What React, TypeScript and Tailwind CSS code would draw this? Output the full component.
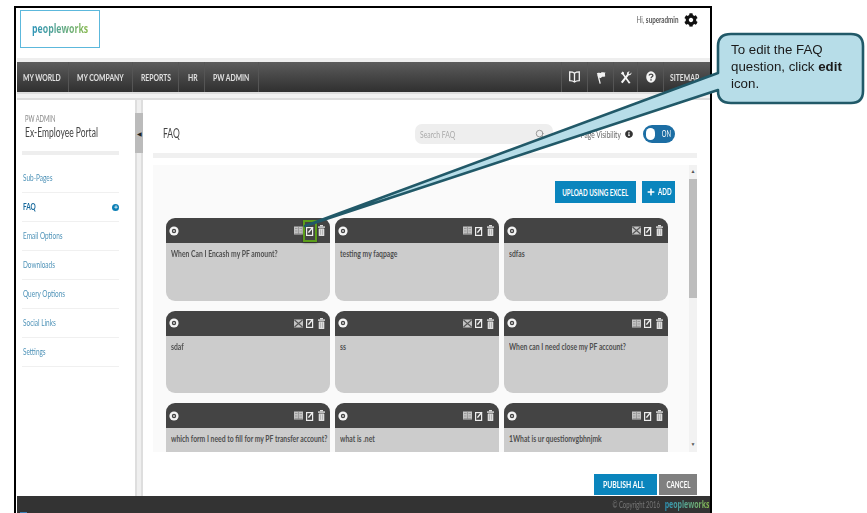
import React from "react";
import { FaCog, FaInfoCircle, FaPlus } from "react-icons/fa";
import { FiSearch } from "react-icons/fi";

const cond = { fontFamily: '"Lato", "Liberation Sans", sans-serif' };

type T = { children: React.ReactNode; c?: string };
function N({ children, c }: T) {
  return <span className={`inline-block whitespace-nowrap origin-left scale-x-[0.68] ${c ?? ""}`}>{children}</span>;
}
function NC({ children, c }: T) {
  return <span className={`inline-block whitespace-nowrap origin-center scale-x-[0.62] ${c ?? ""}`}>{children}</span>;
}
function NR({ children, c }: T) {
  return <span className={`inline-block whitespace-nowrap origin-right scale-x-[0.66] ${c ?? ""}`}>{children}</span>;
}

function Logo({ small }: { small?: boolean }) {
  return (
    <span
      className={`inline-block whitespace-nowrap origin-center scale-x-[0.7] font-bold bg-gradient-to-r from-[#2a93b8] to-[#86b84a] bg-clip-text text-transparent ${small ? "text-[10px]" : "text-[12.5px]"}`}
      style={{ fontFamily: '"Open Sans", sans-serif' }}
    >
      peopleworks
    </span>
  );
}

function Eye() {
  return (
    <svg width="10" height="10" viewBox="0 0 10 10">
      <circle cx="5" cy="5" r="4.6" fill="#f4f4f4" />
      <circle cx="5" cy="5" r="2.2" fill="#444" />
      <circle cx="5" cy="5" r="0.9" fill="#ddd" />
    </svg>
  );
}

function Book({ crossed }: { crossed?: boolean }) {
  return (
    <svg width="9" height="9" viewBox="0 0 9 9">
      <rect x="0" y="0.5" width="9" height="8" fill="#c4c4c4" />
      {crossed ? (
        <path d="M0.5 1L8.5 8M8.5 1L0.5 8" stroke="#555" strokeWidth="1.1" />
      ) : (
        <path d="M1 2.5h2.5M1 5h2.5M5.5 2.5h2.5M5.5 5h2.5M4.5 1v7M0.5 7.4h8" stroke="#8a8a8a" strokeWidth="0.7" />
      )}
    </svg>
  );
}

function Edit() {
  return (
    <svg width="8" height="10" viewBox="0 0 8 10">
      <rect x="0.6" y="1.6" width="6" height="7.8" fill="none" stroke="#eeeeee" strokeWidth="1.2" />
      <path d="M2.4 6.6L6.8 1.2" stroke="#eeeeee" strokeWidth="1.5" />
    </svg>
  );
}

function Trash() {
  return (
    <svg width="7" height="11" viewBox="0 0 7 11">
      <rect x="2" y="0" width="3" height="1.4" fill="#dddddd" />
      <rect x="0" y="1.4" width="7" height="1.4" fill="#dddddd" />
      <rect x="0.7" y="3.4" width="5.6" height="7.6" rx="0.6" fill="#dddddd" />
      <path d="M2.5 4.4v5.4M4.5 4.4v5.4" stroke="#999" strokeWidth="0.6" />
    </svg>
  );
}

function NavBook() {
  return (
    <svg width="11" height="12" viewBox="0 0 11 12">
      <path d="M5.5 2.2C4.3 1.2 2.6 0.9 0.7 0.9V9.6C2.6 9.6 4.3 10 5.5 11C6.7 10 8.4 9.6 10.3 9.6V0.9C8.4 0.9 6.7 1.2 5.5 2.2ZM5.5 2.2V11" fill="none" stroke="#f2f2f2" strokeWidth="1.3" />
    </svg>
  );
}
function NavFlag() {
  return (
    <svg width="10" height="13" viewBox="0 0 10 13">
      <path d="M0.8 2.6C2.4 0.8 4 3 5.2 1.6C6.4 0.8 8 2 9.4 1.2C8.6 3 9.2 4.2 9.2 5.2C7.6 6.2 6.6 5 5.4 6.4C4.2 7.4 3.4 6.6 2.8 6.8Z" fill="#f2f2f2" />
      <path d="M2 4L4.2 12.6" stroke="#f2f2f2" strokeWidth="1.3" />
    </svg>
  );
}
function NavTools() {
  return (
    <svg width="12" height="13" viewBox="0 0 12 13">
      <path d="M2.4 0.6L4 1.4V3L10.6 12L8.8 12.6L2.6 3.8L0.9 2.8Z" fill="#f4f4f4" />
      <path d="M11.4 1.6C11.8 3.2 10.4 4.6 8.8 4.2L2.6 12.2L0.9 11L7 3.2C6.6 1.6 8 0.2 9.6 0.6L8.5 2.2L9.8 3.2Z" fill="#f4f4f4" />
    </svg>
  );
}
function NavHelp() {
  return (
    <svg width="10" height="12" viewBox="0 0 10 12">
      <ellipse cx="5" cy="6" rx="4.8" ry="5.8" fill="#f4f4f4" />
      <path d="M3.2 4.6C3.2 2.6 6.9 2.6 6.9 4.6C6.9 5.8 5 5.8 5 7.2" fill="none" stroke="#444" strokeWidth="1.3" />
      <rect x="4.3" y="8.2" width="1.4" height="1.4" fill="#444" />
    </svg>
  );
}

function Card({ text, crossed }: { text: string; crossed?: boolean }) {
  return (
    <div className="h-[82.5px] flex flex-col">
      <div className="h-[25px] shrink-0 bg-[#444444] rounded-t-[9px] flex items-center pl-[3px] pr-[5px]">
        <span className="flex"><Eye /></span>
        <div className="ml-auto flex items-center">
          <Book crossed={crossed} />
          <span className="ml-[3px] flex"><Edit /></span>
          <span className="ml-[4px] flex"><Trash /></span>
        </div>
      </div>
      <div className="flex-1 min-w-0 bg-[#cccccc] rounded-b-[9px] px-[5px] pt-[4px] text-[10px] leading-[12px] font-bold text-[#4f4f4f]">
        <N>{text}</N>
      </div>
    </div>
  );
}

const leftNav = ["MY WORLD", "MY COMPANY", "REPORTS", "HR", "PW ADMIN"];
const navPad = ["pl-[6px] w-[52px]", "pl-[8px] w-[64px]", "pl-[8px] w-[46px]", "pl-[9px] w-[26px]", "pl-[8px] w-[54px]"];
const side = ["Sub-Pages", "FAQ", "Email Options", "Downloads", "Query Options", "Social Links", "Settings"];

const rows: { t: string; c?: boolean }[] = [
  { t: "When Can I Encash my PF amount?" },
  { t: "testing my faqpage" },
  { t: "sdfas", c: true },
  { t: "sdaf", c: true },
  { t: "ss", c: true },
  { t: "When can I need close my PF account?" },
  { t: "which form I need to fill for my PF transfer account?" },
  { t: "what is .net" },
  { t: "1What is ur questionvgbhnjmk" },
];

export default function App() {
  return (
    <div className="relative w-[867px] h-[513px] overflow-hidden bg-white" style={cond}>
      <div className="ml-[14px] mt-[6px] w-[698px] h-[507px] border-l-2 border-r-2 border-t-2 border-black pl-[1px] flex flex-col blur-[0.4px]">
        {/* header */}
        <div className="h-[50px] shrink-0 flex items-start">
          <div className="ml-[3px] mt-[2px] w-[80px] h-[38px] border border-[#5cb8dc] flex items-center justify-center overflow-hidden">
            <Logo />
          </div>
          <div className="ml-auto mr-[12px] mt-[5px] flex items-center gap-[6px]">
            <NR c="text-[9.5px] text-[#666]">Hi, <span className="font-bold text-[#555]">superadmin</span></NR>
            <FaCog className="text-[14px] text-[#111]" />
          </div>
        </div>
        <div className="h-[4px] shrink-0 bg-[#eeeeee]" />
        {/* nav */}
        <div className="h-[30px] shrink-0 bg-gradient-to-b from-[#5c5c5c] to-[#303030] flex items-center text-[10px] font-bold text-[#e0e0e0]">
          {leftNav.map((n, i) => (
            <div key={n} className={`${navPad[i]} h-full flex items-center border-r border-[#555555]`}><N>{n}</N></div>
          ))}
          <div className="ml-auto flex items-center h-full">
            <div className="w-[26px] h-full border-l border-[#555] flex items-center justify-center"><NavBook /></div>
            <div className="w-[26px] h-full border-l border-[#555] flex items-center justify-center"><NavFlag /></div>
            <div className="w-[24px] h-full border-l border-[#555] flex items-center justify-center"><NavTools /></div>
            <div className="w-[26px] h-full border-l border-[#555] flex items-center justify-center"><NavHelp /></div>
            <div className="w-[47px] h-full border-l border-[#555] pl-[6px] flex items-center"><N>SITEMAP</N></div>
          </div>
        </div>
        <div className="h-[8px] shrink-0 bg-[#f2f2f2] border-y-2 border-[#dddddd]" />
        {/* body */}
        <div className="flex-1 min-h-0 flex">
          <aside className="w-[118px] shrink-0 pl-[5px] pr-[16px] pt-[14px]">
            <div className="pl-[3px] text-[8.5px] leading-[10px] text-[#888]"><N>PW ADMIN</N></div>
            <div className="pl-[3px] mt-[1px] text-[12.5px] leading-[16px] text-[#444]"><N>Ex-Employee Portal</N></div>
            <div className="h-[4px] mt-[10px] bg-[#eeeeee] w-[97px]" />
            <div className="mt-[9px] w-[97px]">
              {side.map((s) => (
                <div key={s} className={`h-[29px] flex items-center justify-between border-b border-[#f0f0f0] text-[9.5px] pl-[1px] ${s === "FAQ" ? "font-bold text-[#17699c]" : "text-[#4f93b8]"}`}>
                  <N>{s}</N>
                  {s === "FAQ" && (
                    <span className="shrink-0 w-[7px] h-[7px] rounded-full bg-[#0c7fb5] flex items-center justify-center"><FaPlus className="text-[4px] text-white" /></span>
                  )}
                </div>
              ))}
            </div>
          </aside>
          {/* collapse strip */}
          <div className="w-[8px] shrink-0 bg-[#efefef] border-x-2 border-[#dedede] pt-[13px]">
            <div className="h-[40px] bg-[#bbbbbb] -mx-[2px] flex items-center justify-center text-[6px] text-[#222]">◀</div>
          </div>
          {/* main */}
          <main className="flex-1 min-w-0 pl-[10px] pr-[13px] flex flex-col">
            <div className="h-[53px] shrink-0 flex items-center pt-[20px] pb-[5px]">
              <span className="ml-[10px] w-[252px] shrink-0 text-[12.5px] text-[#444]"><N>FAQ</N></span>
              <div className="w-[138px] shrink-0 h-[20px] rounded-[7px] bg-[#eeeeee] flex items-center justify-between pl-[5px] pr-[8px] text-[10px] text-[#aaaaaa]">
                <N>Search FAQ</N>
                <FiSearch className="text-[10px] text-[#888]" />
              </div>
              <div className="w-[68px] shrink-0 flex justify-end text-[10px] text-[#666]"><NR>Page Visibility</NR></div>
              <FaInfoCircle className="ml-[4px] shrink-0 text-[8px] text-[#333]" />
              <div className="ml-[10px] shrink-0 w-[32px] h-[18px] rounded-full bg-[#1c6ea4] flex items-center pl-[3px] gap-[4px] text-[9.5px] text-white">
                <span className="w-[9px] h-[12px] rounded-full bg-white" /><NC>ON</NC>
              </div>
            </div>
            <div className="h-[5px] shrink-0 bg-[#f0f0f0]" />
            <div className="mt-[7px] h-[287px] shrink-0 bg-[#fafafa] flex overflow-hidden">
              <div className="w-[536px] shrink-0 pl-[13px] pr-[14px] pt-[16px]">
                <div className="flex justify-end gap-[6px] h-[22px] text-[10px] font-bold text-white">
                  <div className="w-[81px] bg-[#0a85bd] flex items-center justify-center"><NC>UPLOAD USING EXCEL</NC></div>
                  <div className="w-[33px] bg-[#0a85bd] flex items-center pl-[5px]"><FaPlus className="text-[8px] shrink-0" /><N c="ml-[3px] text-[9px]">ADD</N></div>
                </div>
                <div className="mt-[15px] grid grid-cols-[164px_164px_164px] gap-x-[5px] gap-y-[10px]">
                  {rows.map((r) => <Card key={r.t} text={r.t} crossed={r.c} />)}
                </div>
              </div>
              <div className="w-[8px] shrink-0 bg-[#f2f2f2] flex flex-col items-center text-[5px] text-[#555]">
                <span className="h-[14px] flex items-center">▲</span>
                <div className="w-full h-[119px] bg-[#bdbdbd]" />
                <span className="mt-auto h-[14px] flex items-center">▼</span>
              </div>
            </div>
            <div className="mt-[22px] flex justify-end gap-[2px] h-[21px] text-[10px] font-bold text-white">
              <div className="w-[63px] bg-[#0a85bd] flex items-center pl-[4px] gap-[5px]"><Book /><N c="scale-x-[0.62]">PUBLISH ALL</N></div>
              <div className="w-[38px] bg-[#808080] flex items-center justify-center"><NC>CANCEL</NC></div>
            </div>
          </main>
        </div>
        {/* footer */}
        <footer className="h-[17px] shrink-0 bg-[#333333] flex items-center justify-end relative">
          <NR c="text-[9px] text-[#777] mr-[4px]">© Copyright 2016</NR>
          <span className="w-[46px] shrink-0 flex justify-center"><Logo small /></span>
          <span className="absolute left-[3px] bottom-0 w-[7px] h-[1px] bg-[#3a7fb5]" />
        </footer>
      </div>

      {/* highlight around the edit icon */}
      <div className="absolute left-[303px] top-[220px] w-[14px] h-[22px] border-2 border-[#5c9e1a] shadow-[0_1px_2px_rgba(0,0,0,0.4)]" />

      {/* callout */}
      <svg className="absolute left-0 top-0 pointer-events-none blur-[0.3px]" width="867" height="513" viewBox="0 0 867 513">
        <path
          d="M731 34 H851 Q863 34 863 46 V91 Q863 103 851 103 H731 Q718 103 718 91 V90 L305 226 L718 73 V46 Q718 34 731 34 Z"
          fill="#b7dde8"
          stroke="#215968"
          strokeWidth="2.6"
          strokeLinejoin="round"
        />
      </svg>
      <div className="absolute left-[731px] top-[41px] w-[125px] text-[13.3px] leading-[17px] text-[#1a1a1a]" style={{ fontFamily: '"Liberation Sans", Arial, sans-serif' }}>
        To edit the FAQ question, click <b>edit</b> icon.
      </div>
    </div>
  );
}
